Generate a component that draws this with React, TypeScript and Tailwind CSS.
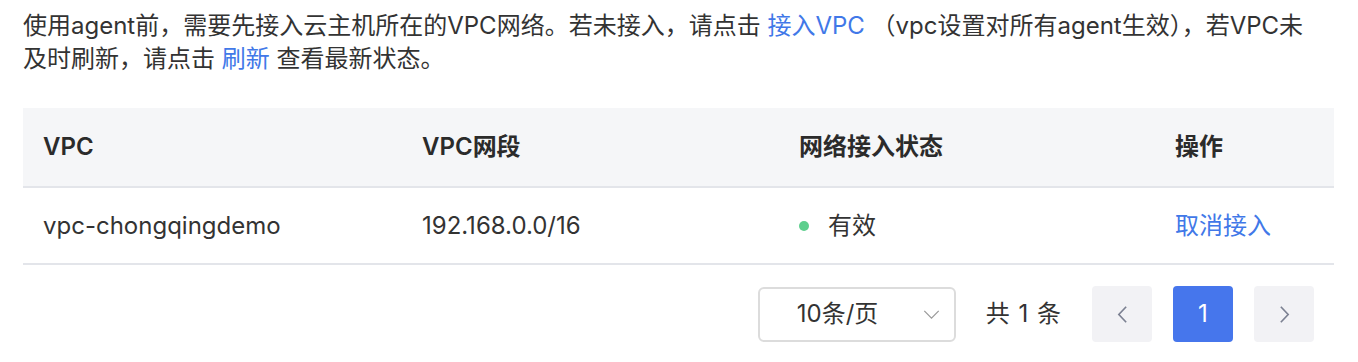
import React from 'react';

const rows = [{ vpc: 'vpc-chongqingdemo', cidr: '192.168.0.0/16', status: '有效' }];

const Chevron: React.FC<{ dir: 'left' | 'right' | 'down'; className?: string }> = ({ dir, className }) => {
    if (dir === 'down') {
        return (
            <svg viewBox="0 0 18 10" className={className} fill="none" stroke="currentColor" strokeWidth={1.4}>
                <path d="M1 1l8 8 8-8" />
            </svg>
        );
    }
    return (
        <svg viewBox="0 0 12 20" className={className} fill="none" stroke="currentColor" strokeWidth={1.8}>
            {dir === 'left' ? <path d="M10 1.5L2 10l8 8.5" /> : <path d="M2 1.5l8 8.5-8 8.5" />}
        </svg>
    );
};

export default function App() {
    return (
        <div className="min-h-screen bg-white pl-[23px] pr-[24px] pt-[9px] font-['Inter','Noto_Sans_CJK_SC',sans-serif] text-[24px] text-[#333]">
            <p className="leading-[33px]">
                使用agent前，需要先接入云主机所在的VPC网络。若未接入，请点击 <a href="#" className="text-[#4178e8]">接入VPC</a> （vpc设置对所有agent生效），若VPC未
                <br />
                及时刷新，请点击 <a href="#" className="text-[#4178e8]">刷新</a> 查看最新状态。
            </p>

            {/* table */}
            <div className="mt-[33px]">
                <div className="grid grid-cols-[379px_377px_376px_1fr] h-[80px] bg-[#f5f6f8] border-b-2 border-[#e3e5ea] font-semibold text-[#2b2b2b]">
                    <div className="flex items-center px-5">VPC</div>
                    <div className="flex items-center px-5">VPC网段</div>
                    <div className="flex items-center px-5">网络接入状态</div>
                    <div className="flex items-center px-5">操作</div>
                </div>
                {rows.map((r) => (
                    <div key={r.vpc} className="grid grid-cols-[379px_377px_376px_1fr] h-[77px] border-b-2 border-[#e3e5ea]">
                        <div className="flex items-center px-5">{r.vpc}</div>
                        <div className="flex items-center px-5">{r.cidr}</div>
                        <div className="flex items-center px-5">
                            <span className="w-[10px] h-[10px] rounded-full bg-[#5dcf8d] mr-[19px]" />
                            {r.status}
                        </div>
                        <div className="flex items-center px-5">
                            <a href="#" className="text-[#4178e8]">取消接入</a>
                        </div>
                    </div>
                ))}
            </div>

            {/* pagination */}
            <div className="mt-[21px] flex items-center justify-end pr-5">
                <div className="w-[198px] h-[55px] border-2 border-[#dcdcdc] rounded-[6px] flex items-center pl-[37px] pr-[14px]">
                    <span className="flex-1">10条/页</span>
                    <Chevron dir="down" className="w-[17px] h-[9px] text-[#9a9a9a]" />
                </div>
                <span className="ml-[30px] mr-[30px] tracking-[1px]">共 1 条</span>
                <button className="w-[60px] h-[56px] rounded-[4px] bg-[#f2f2f5] flex items-center justify-center text-[#7c8192]">
                    <Chevron dir="left" className="w-[11px] h-[19px]" />
                </button>
                <button className="ml-[21px] w-[60px] h-[56px] rounded-[4px] bg-[#4676ec] text-white flex items-center justify-center">
                    1
                </button>
                <button className="ml-[21px] w-[60px] h-[56px] rounded-[4px] bg-[#f2f2f5] flex items-center justify-center text-[#7c8192]">
                    <Chevron dir="right" className="w-[11px] h-[19px]" />
                </button>
            </div>
        </div>
    );
}
